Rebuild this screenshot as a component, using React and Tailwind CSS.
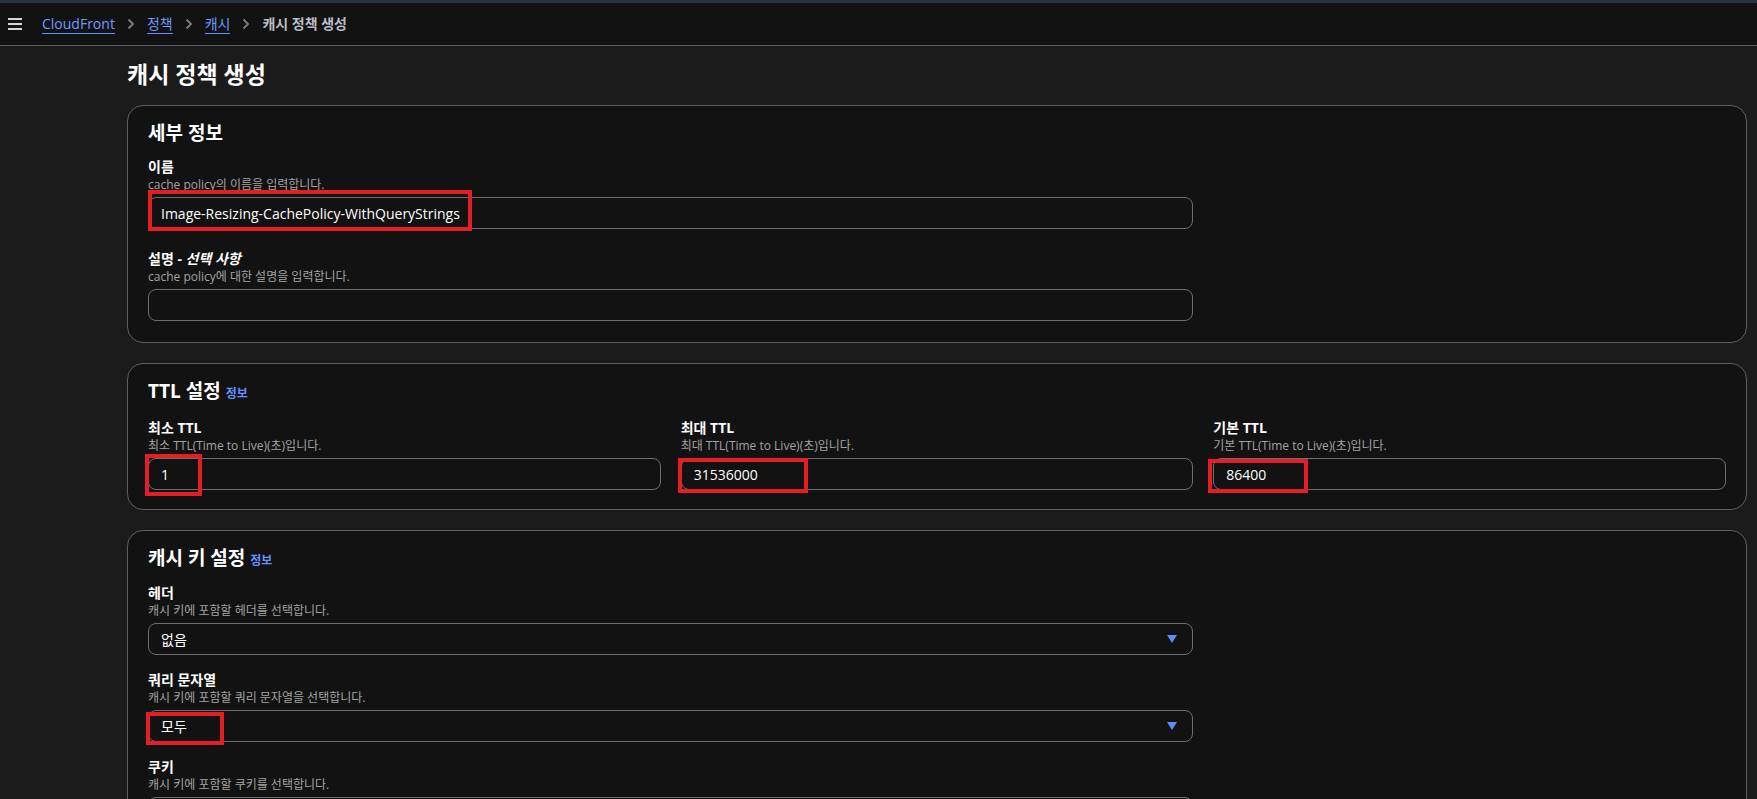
import React from "react";

const FONT = { fontFamily: '"Open Sans", "Noto Sans CJK KR", sans-serif' };

function Chevron() {
  return (
    <svg width="8" height="12" viewBox="0 0 8 12" className="mx-[12px] shrink-0">
      <path d="M1.5 1.5 L6 6 L1.5 10.5" fill="none" stroke="#7d7d7d" strokeWidth="1.8" />
    </svg>
  );
}

function Caret() {
  return (
    <svg width="12" height="10" viewBox="0 0 12 10" className="absolute right-[14px] top-1/2 -translate-y-1/2">
      <path d="M1 1 H11 L6 9 Z" fill="#5a8dff" />
    </svg>
  );
}

function RedBox({ cls }) {
  return <div className={"pointer-events-none absolute border-[4px] border-[#e31e25] " + cls} />;
}

function Field({ label, italic, desc, children }) {
  return (
    <div className="flex flex-col">
      <div className="text-[14px] leading-[20px] font-bold text-white">
        {label}
        {italic && <i> - {italic}</i>}
      </div>
      <div className="text-[12px] leading-[16px] text-[#a3a3a3]">{desc}</div>
      <div className="mt-[4px]">{children}</div>
    </div>
  );
}

function Input({ value, box, select }) {
  return (
    <div className="relative h-[32px] w-full rounded-[8px] border border-[#6f6f6f] bg-[#121212] flex items-center pl-[12px] text-[14px] text-white">
      <span className="relative z-0">{value}</span>
      {select && <Caret />}
      {box && <RedBox cls={box} />}
    </div>
  );
}

function Card({ title, info, pb, mt, children }) {
  return (
    <section className={"rounded-[16px] border border-[#5e5e5e] bg-[#121212] pl-5 pr-5 pt-[13px] " + (pb || "pb-[19px]")}>
      <h2 className="flex items-baseline text-[19px] leading-[28px] font-bold text-white">
        {title}
        {info && <span className="ml-[5px] text-[12px] font-bold text-[#6391ff]">정보</span>}
      </h2>
      <div className={mt || "mt-[10px]"}>{children}</div>
    </section>
  );
}

export default function App() {
  return (
    <div className="min-h-screen bg-[#1b1b1b]" style={FONT}>
      <div className="h-[3px] bg-[#2b3242]" />
      <header className="flex h-[43px] items-center border-b border-[#5a5a5a] bg-[#121212]">
        <div className="ml-[8px] flex w-[14px] flex-col gap-[3px]">
          <span className="h-[2px] bg-[#d5d5d5]" />
          <span className="h-[2px] bg-[#d5d5d5]" />
          <span className="h-[2px] bg-[#d5d5d5]" />
        </div>
        <nav className="ml-[20px] flex items-center text-[14px]">
          <span className="border-b border-[#6391ff] leading-[18px] text-[#6d9bff]">CloudFront</span>
          <Chevron />
          <span className="border-b border-[#6391ff] leading-[18px] text-[#6d9bff]">정책</span>
          <Chevron />
          <span className="border-b border-[#6391ff] leading-[18px] text-[#6d9bff]">캐시</span>
          <Chevron />
          <span className="font-bold leading-[18px] text-[#b8bcc4]">캐시 정책 생성</span>
        </nav>
      </header>
      <main className="pl-[127px] pr-[10px] pb-10">
        <h1 className="mt-[12px] text-[23px] leading-[32px] font-bold text-white">캐시 정책 생성</h1>
        <div className="mt-[15px] flex flex-col gap-5">
          <Card title="세부 정보" pb="pb-[21px]">
            <div className="grid grid-cols-3 gap-x-5 gap-y-5">
              <div className="col-span-2">
                <Field label="이름" desc="cache policy의 이름을 입력합니다.">
                  <Input value="Image-Resizing-CachePolicy-WithQueryStrings" box="-left-[1px] -top-[8px] w-[324px] h-[41px]" />
                </Field>
              </div>
              <div />
              <div className="col-span-2">
                <Field label="설명" italic="선택 사항" desc="cache policy에 대한 설명을 입력합니다.">
                  <Input value="" />
                </Field>
              </div>
            </div>
          </Card>

          <Card title="TTL 설정" info>
            <div className="grid grid-cols-3 gap-x-5">
              <Field label="최소 TTL" desc="최소 TTL(Time to Live)(초)입니다.">
                <Input value="1" box="-left-[4px] -top-[5px] w-[57px] h-[42px]" />
              </Field>
              <Field label="최대 TTL" desc="최대 TTL(Time to Live)(초)입니다.">
                <Input value="31536000" box="-left-[4px] -top-[1px] w-[130px] h-[35px]" />
              </Field>
              <Field label="기본 TTL" desc="기본 TTL(Time to Live)(초)입니다.">
                <Input value="86400" box="-left-[6px] top-0 w-[100px] h-[34px]" />
              </Field>
            </div>
          </Card>

          <Card title="캐시 키 설정" info mt="mt-[8px]">
            <div className="grid grid-cols-3 gap-x-5 gap-y-[15px]">
              <div className="col-span-2">
                <Field label="헤더" desc="캐시 키에 포함할 헤더를 선택합니다.">
                  <Input value="없음" select />
                </Field>
              </div>
              <div />
              <div className="col-span-2">
                <Field label="쿼리 문자열" desc="캐시 키에 포함할 쿼리 문자열을 선택합니다.">
                  <Input value="모두" select box="-left-[3px] top-[1px] w-[78px] h-[33px]" />
                </Field>
              </div>
              <div />
              <div className="col-span-2">
                <Field label="쿠키" desc="캐시 키에 포함할 쿠키를 선택합니다.">
                  <Input value="없음" select />
                </Field>
              </div>
            </div>
          </Card>
        </div>
      </main>
    </div>
  );
}
